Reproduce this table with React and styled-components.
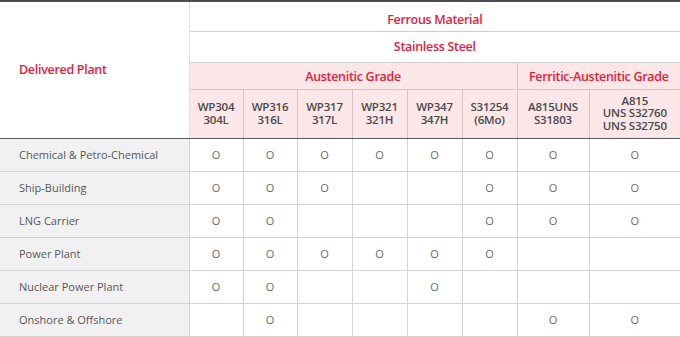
import styled, { createGlobalStyle } from 'styled-components';

const GlobalStyle = createGlobalStyle`
    html, body {
        margin: 0;
        padding: 0;
        background: #ffffff;
    }
`

const columns = [189, 54, 54, 55, 55, 55, 55, 72, 91];

const grades = [
    ['WP304', '304L'],
    ['WP316', '316L'],
    ['WP317', '317L'],
    ['WP321', '321H'],
    ['WP347', '347H'],
    ['S31254', '(6Mo)'],
    ['A815UNS', 'S31803'],
    ['A815', 'UNS S32760', 'UNS S32750'],
];

const plants = [
    { name: 'Chemical & Petro-Chemical', marks: [1, 1, 1, 1, 1, 1, 1, 1] },
    { name: 'Ship-Building', marks: [1, 1, 1, 0, 0, 1, 1, 1] },
    { name: 'LNG Carrier', marks: [1, 1, 0, 0, 0, 1, 1, 1] },
    { name: 'Power Plant', marks: [1, 1, 1, 1, 1, 1, 0, 0] },
    { name: 'Nuclear Power Plant', marks: [1, 1, 0, 0, 1, 0, 0, 0] },
    { name: 'Onshore & Offshore', marks: [0, 1, 0, 0, 0, 0, 1, 1] },
];

const App = () => {
    return (
        <>
            <GlobalStyle />
            <Table>
                <colgroup>
                    {columns.map((w, i) => <col key={i} style={{ width: w }} />)}
                </colgroup>
                <thead>
                    <HeadRow $height={30}>
                        <PlantHead rowSpan={4}>Delivered Plant</PlantHead>
                        <GroupCell colSpan={8} $top={6}>Ferrous Material</GroupCell>
                    </HeadRow>
                    <HeadRow $height={31}>
                        <GroupCell colSpan={8} $top={0}>Stainless Steel</GroupCell>
                    </HeadRow>
                    <HeadRow $height={27}>
                        <GradeCell colSpan={6}>Austenitic Grade</GradeCell>
                        <GradeCell colSpan={2}>Ferritic-Austenitic Grade</GradeCell>
                    </HeadRow>
                    <HeadRow $height={49}>
                        {grades.map((lines, i) => (
                            <SpecCell key={i}>
                                {lines.map((l, j) => <SpecLine key={j}>{l}</SpecLine>)}
                            </SpecCell>
                        ))}
                    </HeadRow>
                </thead>
                <tbody>
                    {plants.map((p) => (
                        <BodyRow key={p.name}>
                            <PlantCell>{p.name}</PlantCell>
                            {p.marks.map((m, i) => (
                                <MarkCell key={i}>{m ? 'O' : ''}</MarkCell>
                            ))}
                        </BodyRow>
                    ))}
                </tbody>
            </Table>
        </>
    );
}

export const Table = styled.table`
    width: 680px;
    table-layout: fixed;
    border-collapse: collapse;
    border-top: 2px solid #4a4e51;
    font-family: "Open Sans", "Noto Sans", sans-serif;
`

export const HeadRow = styled.tr`
    height: ${(p) => p.$height}px;
`

export const PlantHead = styled.th`
    text-align: left;
    padding: 0 0 0 19px;
    font-size: 12.5px;
    font-weight: 600;
    letter-spacing: -0.3px;
    color: #e5203a;
    border-right: 1px solid #dedede;
    border-bottom: 1px solid #55585a;
    vertical-align: middle;
`

export const GroupCell = styled.th`
    padding: ${(p) => p.$top}px 0 0 0;
    font-size: 12.5px;
    font-weight: 600;
    letter-spacing: -0.3px;
    color: #e5203a;
    border-bottom: 1px solid #cfcfcf;
    text-align: center;
`

export const GradeCell = styled.th`
    padding: 2px 0 0 0;
    font-size: 12.5px;
    font-weight: 600;
    letter-spacing: -0.3px;
    color: #e5203a;
    background: #fbe6e8;
    border: 1px solid #d6c6c8;
    border-top-color: #cdbcbe;
    &:last-child {
        border-right: none;
    }
`

export const SpecCell = styled.th`
    padding: 0;
    font-size: 11.5px;
    font-weight: 600;
    letter-spacing: -0.2px;
    color: #4a4a4a;
    background: #fbe6e8;
    border-left: 1px solid #d6c6c8;
    border-bottom: 1px solid #55585a;
`

export const SpecLine = styled.div`
    height: 12.5px;
    line-height: 12.5px;
`

export const BodyRow = styled.tr`
    height: 33px;
`

export const PlantCell = styled.td`
    padding: 0 0 0 19px;
    font-size: 11px;
    color: #585858;
    background: #f1f1f1;
    border-bottom: 1px solid #d3d3d3;
    border-right: 1px solid #d3d3d3;
`

export const MarkCell = styled.td`
    padding: 0;
    text-align: center;
    font-size: 11px;
    color: #6a6a6a;
    border-bottom: 1px solid #d3d3d3;
    border-left: 1px solid #d3d3d3;
`

export default App;
